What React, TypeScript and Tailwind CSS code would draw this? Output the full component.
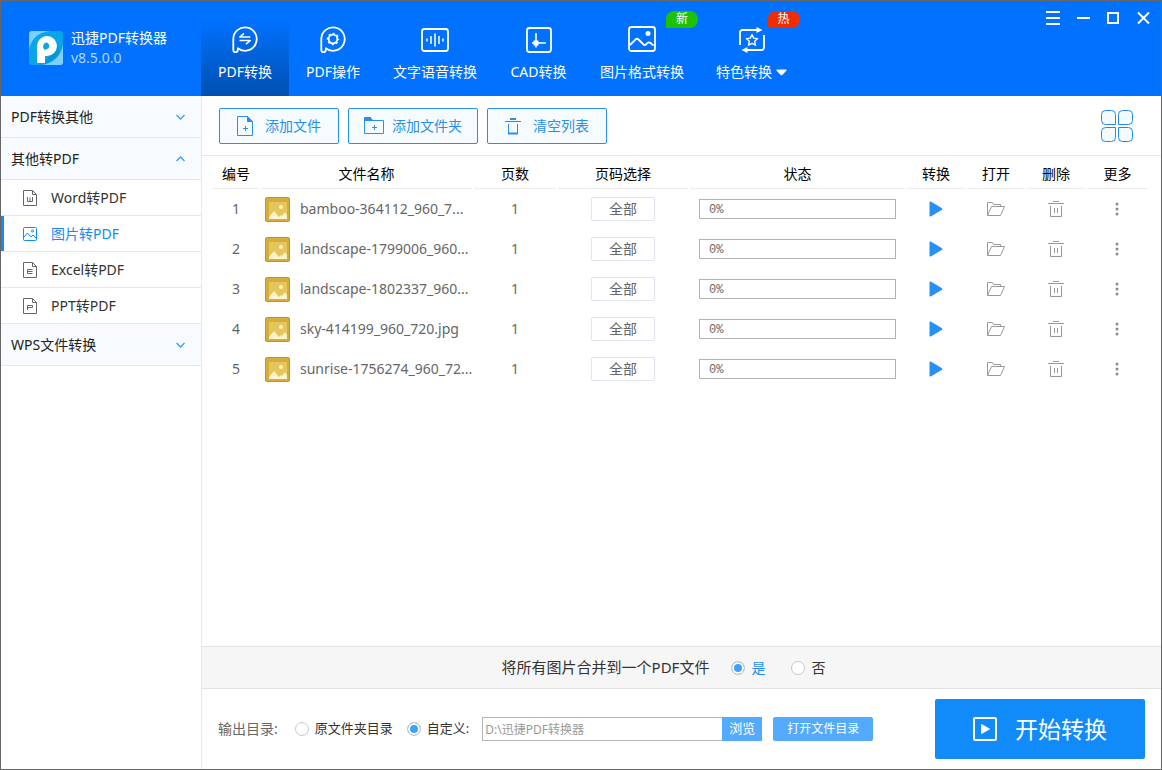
import React, { useState } from 'react'
import clsx from 'clsx'

const HeaderIcon: React.FC<{ children: React.ReactNode }> = ({ children }) => (
  <svg
    width="28"
    height="28"
    viewBox="0 0 28 28"
    fill="none"
    stroke="currentColor"
    strokeWidth="1.8"
    strokeLinejoin="round"
    aria-hidden="true"
  >
    {children}
  </svg>
)

const BUBBLE = 'M2.3 25V14a11.7 11.7 0 1 1 4.5 9.3V25a2.2 2.2 0 0 1-4.5 0'

const ConvertIcon = () => (
  <HeaderIcon>
    <path d={BUBBLE} />
    <path d="M13 8.300 8.800 12h10.500M15 19.200l4.300-3.700H8.500" strokeWidth="1.600" />
  </HeaderIcon>
)

const OperateIcon = () => (
  <HeaderIcon>
    <path d={BUBBLE} />
    <circle cx="14" cy="14" r="4.300" strokeWidth="1.800" />
    <circle cx="14" cy="14" r="5.500" strokeWidth="1.400" strokeDasharray="2.16 2.16" strokeDashoffset="1.08" />
  </HeaderIcon>
)

const VoiceIcon = () => (
  <HeaderIcon>
    <rect x="1" y="4" width="26" height="22" rx="2.5" />
    <path d="M6 13.5v3M10 11v8M14 8.5v13M18 11v8M22 13.5v3" strokeWidth="1.5" />
  </HeaderIcon>
)

const CadIcon = () => (
  <HeaderIcon>
    <rect x="2" y="3" width="24" height="24" rx="2.5" />
    <path d="M11 8v14.5M7 18h14" strokeWidth="1.6" />
    <path d="M8.5 15.5h5v5h-5z" fill="currentColor" stroke="none" />
  </HeaderIcon>
)

const PictureIcon = () => (
  <HeaderIcon>
    <rect x="1" y="2" width="26" height="24" rx="2.5" />
    <path d="M2 20l5.500-5.500q1.500-1.500 3 0l5 5q1.200 1 2.400 0l1.600-1.500q1.500-1.200 3 0l3 2.500" />
    <circle cx="20" cy="8.500" r="2.500" fill="currentColor" stroke="none" />
  </HeaderIcon>
)

const SpecialIcon = () => (
  <HeaderIcon>
    <path d="M2 20V7.500a2.500 2.500 0 0 1 2.500-2.500H20M26 10v12.500a2.500 2.500 0 0 1-2.500 2.500H8" />
    <path d="M18.500 2l6 3-6 3zM9.500 22l-6 3 6 3z" fill="currentColor" stroke="none" />
    <path d="M14 9.500l1.700 3.600 3.900.5-2.900 2.700.8 3.900-3.500-1.900-3.500 1.900.8-3.900-2.900-2.700 3.900-.5z" strokeWidth="1.400" />
  </HeaderIcon>
)

const Logo = () => (
  <svg width="34" height="34" viewBox="0 0 34 34" aria-hidden="true">
    <defs>
      <clipPath id="logo-clip">
        <rect width="34" height="34" rx="3" />
      </clipPath>
    </defs>
    <g clipPath="url(#logo-clip)">
      <rect width="34" height="34" fill="#0aa5e8" />
      <path d="M0 20C1 9 9 1 21 0H0zM34 13c-1 11-10 20-21 21h21z" fill="#7dd0f5" />
      <path d="M15 32L29 15q4 8-4 13-5 4-10 4z" fill="#0794d6" />
      <path
        d="M8 32V15A10 10 0 0 1 18 5a10 10 0 0 1 0 20h-2v7zM18 11.500a4 4 0 0 0-3 6.500v.8l2.500-.300A3.700 3.700 0 0 0 18 11.500z"
        fill="#fff"
        fillRule="evenodd"
      />
    </g>
  </svg>
)

const DocIcon: React.FC<{ mark: string }> = ({ mark }) => (
  <svg width="14" height="16" viewBox="0 0 14 16" fill="none" stroke="#666" aria-hidden="true">
    <path d="M.5.500h9l4 4v11H.500z" />
    <path d="M9.500.500v4h4" />
    <path d={mark} />
  </svg>
)

const SmallPictureIcon = () => (
  <svg width="14" height="14" viewBox="0 0 14 14" fill="none" stroke="currentColor" aria-hidden="true">
    <rect x=".5" y=".5" width="13" height="13" rx="1" />
    <path d="M1 10l3.500-4L8 10l2-2 3 3" />
    <circle cx="9.500" cy="4" r="1" />
  </svg>
)

const Chevron: React.FC<{ open?: boolean }> = ({ open }) => (
  <svg width="9" height="6" viewBox="0 0 9 6" fill="none" stroke="#3a9df6" strokeWidth="1.300" aria-hidden="true">
    <path d={open ? 'M.5 5l4-4 4 4' : 'M.5 1l4 4 4-4'} />
  </svg>
)

const AddFileIcon = () => (
  <svg width="16" height="20" viewBox="0 0 16 20" fill="none" stroke="currentColor" aria-hidden="true">
    <path d="M.5.500h10l5 5v14H.500z" />
    <path d="M10.500.500l5 5h-5z" fill="currentColor" />
    <path d="M6 12.500h5M8.500 10v5" />
  </svg>
)

const AddFolderIcon = () => (
  <svg width="20" height="18" viewBox="0 0 20 18" fill="none" stroke="currentColor" aria-hidden="true">
    <path d="M.5 3.500h19v13H.500z" />
    <path d="M.5.500h6l2 3h-8z" fill="currentColor" />
    <path d="M8 10.500h5M10.500 8v5" />
  </svg>
)

const ClearIcon = () => (
  <svg width="16" height="18" viewBox="0 0 16 18" fill="none" stroke="currentColor" aria-hidden="true">
    <path d="M0 4.500h16" />
    <path d="M5 2h6" strokeWidth="2" />
    <path d="M3.500 7v9.500h9V7" />
    <path d="M3 16.500h10" strokeWidth="2" />
  </svg>
)

const GridIcon = () => (
  <svg width="32" height="32" viewBox="0 0 32 32" fill="#f5faff" stroke="#1c8af2" aria-hidden="true">
    <path d="M4.500.500h6a4 4 0 0 1 4 4v10h-10a4 4 0 0 1-4-4v-6a4 4 0 0 1 4-4z" />
    <path d="M21.500.500h6a4 4 0 0 1 4 4v6a4 4 0 0 1-4 4h-10v-10a4 4 0 0 1 4-4z" />
    <path d="M4.500 17.500h10v10a4 4 0 0 1-4 4h-6a4 4 0 0 1-4-4v-6a4 4 0 0 1 4-4z" />
    <path d="M17.500 17.500h10a4 4 0 0 1 4 4v6a4 4 0 0 1-4 4h-6a4 4 0 0 1-4-4z" />
  </svg>
)

const ThumbIcon = () => (
  <svg width="25" height="25" viewBox="0 0 25 25" className="shrink-0" aria-hidden="true">
    <rect x=".5" y=".5" width="24" height="24" rx="1.500" fill="#d4ae38" stroke="#be962a" />
    <rect x="4" y="5" width="18" height="17" fill="#e6c65a" />
    <path d="M4 22v-2l5-6 5 6 2-2 1 1 3-4 2 3v4z" fill="#fff3cf" />
    <circle cx="16" cy="10" r="2" fill="#fff3cf" />
  </svg>
)

const PlayIcon = () => (
  <svg width="14" height="16" viewBox="0 0 14 16" fill="#2590f5" aria-hidden="true">
    <path d="M.5 1.500Q.500.200 1.800.500L13 7.200q.800.800 0 1.600L1.800 15.500Q.500 15.800.500 14.500z" />
  </svg>
)

const FolderOpenIcon = () => (
  <svg width="20" height="16" viewBox="0 0 20 16" fill="none" stroke="#999" aria-hidden="true">
    <path d="M1.500 14.500V1.500h5l1 2h7v2" />
    <path d="M1.500 14.500l4-9h13l-4 9z" />
  </svg>
)

const TrashIcon = () => (
  <svg width="16" height="16" viewBox="0 0 16 16" fill="none" stroke="#999" aria-hidden="true">
    <path d="M5 .5h6M0 2.500h16M2.500 5v10.500h11V5M6.500 7v5M9.500 7v5" />
  </svg>
)

const MoreIcon = () => (
  <svg width="4" height="14" viewBox="0 0 4 14" fill="#8c8c8c" aria-hidden="true">
    <circle cx="2" cy="2" r="1.500" />
    <circle cx="2" cy="7" r="1.500" />
    <circle cx="2" cy="12" r="1.500" />
  </svg>
)

const tabs = [
  { label: 'PDF转换', icon: ConvertIcon },
  { label: 'PDF操作', icon: OperateIcon },
  { label: '文字语音转换', icon: VoiceIcon },
  { label: 'CAD转换', icon: CadIcon, width: 'w-[91px]' },
  { label: '图片格式转换', icon: PictureIcon, badge: '新', badgeClass: 'ml-2.5 bg-[#1fc203]' },
  { label: '特色转换', icon: SpecialIcon, badge: '热', badgeClass: 'ml-0.5 bg-[#f02d00]', more: true },
]

const windowButtons = [
  { label: '菜单', d: 'M0 1h14M0 7h14M0 13h14' },
  { label: '最小化', d: 'M1 7h13' },
  { label: '最大化', d: 'M2 2h10v10H2z' },
  { label: '关闭', d: 'M2 1.500l11 11M13 1.500l-11 11' },
]

const subItems = [
  { label: 'Word转PDF', icon: <DocIcon mark="M4.500 7v4.500h5V7M7 7.500v4" /> },
  { label: '图片转PDF', icon: <SmallPictureIcon /> },
  { label: 'Excel转PDF', icon: <DocIcon mark="M9.500 7.500h-5v4h5M4.500 9.500h5" /> },
  { label: 'PPT转PDF', icon: <DocIcon mark="M4.500 12V7.500h5v2h-5" /> },
]

const files = [
  'bamboo-364112_960_7...',
  'landscape-1799006_960...',
  'landscape-1802337_960...',
  'sky-414199_960_720.jpg',
  'sunrise-1756274_960_72...',
]

const columns = [
  { label: '编号', width: 'w-[46px]' },
  { label: '文件名称', width: 'w-[211px]' },
  { label: '页数', width: 'w-[82px]' },
  { label: '页码选择', width: 'w-[130px]' },
  { label: '状态', width: '' },
  { label: '转换', width: 'w-[58px]' },
  { label: '打开', width: 'w-[58px]' },
  { label: '删除', width: 'w-[58px]' },
  { label: '更多', width: 'w-[61px]' },
]

const Header = () => (
  <header className="flex h-[95px] shrink-0 bg-[#0072ff] text-white">
    <div className="flex w-[200px] shrink-0 items-center gap-2 pb-0.5 pl-7">
      <Logo />
      <div className="text-sm leading-5">
        <h1>迅捷PDF转换器</h1>
        <p className="text-[#b5d6ff]">v8.5.0.0</p>
      </div>
    </div>
    <nav className="flex">
      {tabs.map((tab, i) => (
        <button
          key={tab.label}
          type="button"
          className={clsx(
            'flex min-w-22 flex-col items-center px-4 pt-6',
            tab.width,
            i === 0 && 'bg-linear-to-b from-[#0072ff] from-20% to-[#0050b2]'
          )}
        >
          <span className="relative">
            <tab.icon />
            {tab.badge && (
              <span
                className={clsx(
                  'absolute bottom-full left-full -mb-[3px] h-[17px] w-8 rounded-t-lg rounded-br-lg text-xs leading-4',
                  tab.badgeClass
                )}
              >
                {tab.badge}
              </span>
            )}
          </span>
          <span className="mt-[9px] flex items-center gap-1 text-sm leading-5 whitespace-nowrap">
            {tab.label}
            {tab.more && (
              <svg width="11" height="7" viewBox="0 0 11 7" fill="currentColor" aria-hidden="true">
                <path d="M1 .5h9q1 .3.500 1L6.300 6q-.8.700-1.600 0L.500 1.500Q0 .800 1 .500z" />
              </svg>
            )}
          </span>
        </button>
      ))}
    </nav>
    <div className="ml-auto flex gap-4 self-start pt-2.5 pr-[11px]">
      {windowButtons.map((b) => (
        <button key={b.label} type="button" aria-label={b.label}>
          <svg width="14" height="14" viewBox="0 0 14 14" fill="none" stroke="currentColor" strokeWidth="2">
            <path d={b.d} />
          </svg>
        </button>
      ))}
    </div>
  </header>
)

const SectionButton: React.FC<{ label: string; open?: boolean }> = ({ label, open }) => (
  <button
    type="button"
    aria-expanded={!!open}
    className="flex h-[42px] w-full items-center justify-between border-b border-[#e6e8eb] bg-[#f7faff] pr-4 pl-2.5 text-sm text-[#222]"
  >
    {label}
    <Chevron open={open} />
  </button>
)

const Sidebar: React.FC = () => {
  const [active, setActive] = useState('图片转PDF')

  return (
    <aside className="w-[201px] shrink-0 border-r border-[#e6e8eb]">
      <SectionButton label="PDF转换其他" />
      <SectionButton label="其他转PDF" open />
      <ul>
        {subItems.map((item) => (
          <li key={item.label} className="border-b border-[#e6e8eb]">
            <button
              type="button"
              onClick={() => setActive(item.label)}
              className={clsx(
                'flex h-[35px] w-full items-center gap-3.5 border-l-3 pl-[19px] text-sm',
                active === item.label ? 'border-[#1489f7] text-[#1489f7]' : 'border-transparent text-[#333]'
              )}
            >
              {item.icon}
              {item.label}
            </button>
          </li>
        ))}
      </ul>
      <SectionButton label="WPS文件转换" />
    </aside>
  )
}

const toolButton = 'flex h-9 items-center rounded-xs border border-[#2590f0] bg-[#f5fbff] text-sm text-[#2590f0]'

const Toolbar = () => (
  <div className="flex h-[60px] shrink-0 items-center border-b border-[#e8e8e8] pr-7 pl-[17px]">
    <div className="flex gap-[9px]">
      <button type="button" className={clsx(toolButton, 'gap-3 px-[17px]')}>
        <AddFileIcon />
        添加文件
      </button>
      <button type="button" className={clsx(toolButton, 'gap-2 px-[15px]')}>
        <AddFolderIcon />
        添加文件夹
      </button>
      <button type="button" className={clsx(toolButton, 'gap-3 px-[17px]')}>
        <ClearIcon />
        清空列表
      </button>
    </div>
    <button type="button" aria-label="切换视图" className="ml-auto">
      <GridIcon />
    </button>
  </div>
)

const FileTable = () => (
  <div className="flex-1 pr-[11px] pl-[9px]">
    <table className="w-full table-fixed border-separate border-spacing-x-0.5 border-spacing-y-0 text-sm text-[#666]">
      <thead>
        <tr>
          {columns.map((c) => (
            <th
              key={c.label}
              scope="col"
              className={clsx('h-[33px] border-b border-[#ebebeb] px-0 pt-1 pb-0 font-normal text-black', c.width)}
            >
              {c.label}
            </th>
          ))}
        </tr>
      </thead>
      <tbody>
        {files.map((name, i) => (
          <tr key={name} className="h-10 text-center">
            <td>{i + 1}</td>
            <td>
              <div className="flex items-center gap-2.5 pl-1 whitespace-nowrap">
                <ThumbIcon />
                {name}
              </div>
            </td>
            <td>1</td>
            <td>
              <button type="button" className="mx-auto block h-6 w-16 rounded-xs border border-[#e0e3f0] leading-5">
                全部
              </button>
            </td>
            <td className="px-[9px]">
              <div
                role="progressbar"
                aria-valuenow={0}
                aria-label={name}
                className="h-5 border border-[#b2b2b2] pl-[9px] text-left font-['Liberation_Mono',monospace] text-xs leading-5"
              >
                0%
              </div>
            </td>
            <td>
              <button type="button" aria-label="转换" className="mx-auto block">
                <PlayIcon />
              </button>
            </td>
            <td>
              <button type="button" aria-label="打开" className="mx-auto block">
                <FolderOpenIcon />
              </button>
            </td>
            <td>
              <button type="button" aria-label="删除" className="mx-auto block">
                <TrashIcon />
              </button>
            </td>
            <td className="pr-0.5">
              <button type="button" aria-label="更多" className="mx-auto block">
                <MoreIcon />
              </button>
            </td>
          </tr>
        ))}
      </tbody>
    </table>
  </div>
)

interface RadioProps {
  name: string
  label: string
  checked: boolean
  onChange: () => void
  className?: string
}

const Radio: React.FC<RadioProps> = ({ name, label, checked, onChange, className }) => (
  <label className={clsx('flex items-center gap-1.5 whitespace-nowrap', className)}>
    <input
      type="radio"
      name={name}
      checked={checked}
      onChange={onChange}
      className="size-3.5 shrink-0 appearance-none rounded-full border border-[#c9c9c9] bg-white checked:bg-[#3fa2f4] checked:shadow-[inset_0_0_0_2px_white]"
    />
    {label}
  </label>
)

const MergeBar = () => {
  const [merge, setMerge] = useState(true)

  return (
    <div className="flex h-[43px] shrink-0 items-center justify-center border-y border-[#e2e2e2] bg-[#f6f6f6] pr-9 text-sm text-[#333]">
      <span className="mr-[22px] text-[15px]">将所有图片合并到一个PDF文件</span>
      <Radio
        name="merge"
        label="是"
        checked={merge}
        onChange={() => setMerge(true)}
        className={clsx('mr-[26px]', merge && 'text-[#1e8ef5]')}
      />
      <Radio name="merge" label="否" checked={!merge} onChange={() => setMerge(false)} />
    </div>
  )
}

const OutputBar = () => {
  const [custom, setCustom] = useState(true)
  const [path, setPath] = useState('D:\\迅捷PDF转换器')

  return (
    <footer className="flex h-20 shrink-0 items-center px-4 text-[13px] text-[#333]">
      <span className="mr-[17px] text-sm text-[#666]">输出目录:</span>
      <Radio name="dir" label="原文件夹目录" checked={!custom} onChange={() => setCustom(false)} className="mr-3.5" />
      <Radio name="dir" label="自定义:" checked={custom} onChange={() => setCustom(true)} className="mr-[13px]" />
      <input
        type="text"
        aria-label="输出路径"
        value={path}
        onChange={(e) => setPath(e.target.value)}
        className="h-6 w-60 border border-r-0 border-[#b4b4b4] px-0.5 text-xs text-[#999] outline-none"
      />
      <button type="button" className="h-6 w-10 bg-[#54aaff] text-[13px] text-white">
        浏览
      </button>
      <button type="button" className="ml-[11px] h-6 w-[100px] rounded-xs bg-[#54aaff] text-xs text-white">
        打开文件目录
      </button>
      <button
        type="button"
        className="ml-auto flex h-15 w-[210px] items-center justify-center gap-[18px] rounded-xs bg-[#118bf9] text-[23px] text-white"
      >
        <svg width="24" height="24" viewBox="0 0 24 24" fill="none" stroke="currentColor" strokeWidth="2" aria-hidden="true">
          <rect x="1" y="1" width="22" height="22" rx="1" />
          <path d="M8.500 7.500l8 4.500-8 4.500z" fill="currentColor" strokeWidth="1" strokeLinejoin="round" />
        </svg>
        开始转换
      </button>
    </footer>
  )
}

export default function App() {
  return (
    <div className="flex min-h-screen flex-col border border-[#666] bg-white font-['Noto_Sans','Noto_Sans_CJK_SC',sans-serif]">
      <Header />
      <div className="flex flex-1">
        <Sidebar />
        <main className="flex min-w-0 flex-1 flex-col">
          <Toolbar />
          <FileTable />
          <MergeBar />
          <OutputBar />
        </main>
      </div>
    </div>
  )
}
